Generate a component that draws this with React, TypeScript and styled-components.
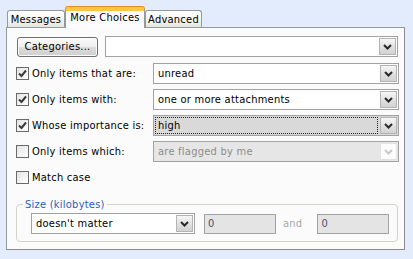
import React from "react";
import styled, { createGlobalStyle, css } from "styled-components";

const Global = createGlobalStyle`
  html, body { margin: 0; padding: 0; }
  body {
    background: #e2ecfc;
    font-family: "DejaVu Sans Condensed", "DejaVu Sans", "Liberation Sans", sans-serif;
    font-size: 11px;
    letter-spacing: 0.25px;
    color: #000;
    width: 413px;
    height: 259px;
    overflow: hidden;
  }
`;

const Page = styled.div`
  padding: 7px 0 0 6px;
`;

const TabRow = styled.div`
  display: flex;
  align-items: flex-end;
  height: 20px;
  margin-left: 1px;
`;

const Tab = styled.div<{ $active?: boolean; $w: number }>`
  box-sizing: border-box;
  width: ${(p) => p.$w}px;
  height: 17px;
  display: flex;
  align-items: center;
  justify-content: center;
  border: 1px solid #919b9c;
  border-bottom: none;
  border-radius: 3px 3px 0 0;
  background: linear-gradient(#ffffff, #f3f3ef 60%, #e7e7e1);
  color: #000;
  padding-top: 1px;
  ${(p) =>
    p.$active &&
    css`
      height: 21px;
      margin-bottom: -1px;
      position: relative;
      z-index: 1;
      background: #fcfcfe;
      border-top: 3px solid #ffc83c;
      box-shadow: inset 0 1px 0 #ffc83c, 0 -1px 0 #e68b2c;
      align-items: flex-start;
      padding-top: 1px;
    `}
`;

const Panel = styled.div`
  box-sizing: border-box;
  width: 399px;
  height: 223px;
  border: 1px solid #919b9c;
  border-right-color: #8c8c8c;
  border-bottom-color: #8c8c8c;
  background: #fbfbfb;
  padding: 8px 5px 0 9px;
  display: flex;
  flex-direction: column;
`;

const TopRow = styled.div`
  display: flex;
  align-items: center;
  height: 21px;
`;

const Button = styled.div`
  box-sizing: border-box;
  width: 81px;
  height: 20px;
  margin-left: 1px;
  border: 1px solid #707070;
  border-radius: 3px;
  background: linear-gradient(#fbfbfb, #eeeeee 50%, #dcdcdc 51%, #cfcfcf);
  box-shadow: inset 0 0 0 1px #fbfbfb;
  display: flex;
  align-items: center;
  justify-content: center;
  padding-bottom: 1px;
`;

const Combo = styled.div<{ $state?: "normal" | "focus" | "disabled"; $w?: number }>`
  box-sizing: border-box;
  height: 21px;
  ${(p) => (p.$w ? `width: ${p.$w}px;` : "flex: 1;")}
  border: 1px solid #a2a2a2;
  padding: 1px;
  display: flex;
  align-items: stretch;
  background: ${(p) =>
    p.$state === "focus" ? "#d9d9d9" : p.$state === "disabled" ? "#e6e6e6" : "#ffffff"};
  color: ${(p) => (p.$state === "disabled" ? "#8d8d8d" : "#000")};
`;

const ComboText = styled.div<{ $focus?: boolean }>`
  flex: 1;
  display: flex;
  align-items: center;
  padding-left: 2px;
  white-space: nowrap;
  overflow: hidden;
  border: 1px dotted ${(p) => (p.$focus ? "#222" : "transparent")};
  margin: 0 2px 0 0;
`;

const ArrowBtn = styled.div<{ $disabled?: boolean }>`
  box-sizing: border-box;
  width: 17px;
  height: 17px;
  display: flex;
  align-items: center;
  justify-content: center;
  border: 1px solid ${(p) => (p.$disabled ? "#e2e2e2" : "#b4b4b4")};
  background: ${(p) =>
    p.$disabled ? "#fcfcfc" : "linear-gradient(#f6f6f6, #e2e2e2 50%, #d2d2d2)"};
  color: ${(p) => (p.$disabled ? "#c8c8c8" : "#2a2a2a")};
`;

const TextField = styled.div`
  box-sizing: border-box;
  flex: 1;
  height: 21px;
  margin-left: 7px;
  margin-right: 1px;
  border: 1px solid #a2a2a2;
  padding: 1px;
  background: #fff;
  display: flex;
  justify-content: flex-end;
`;

const Grid = styled.div`
  display: grid;
  grid-template-columns: 137px 1fr;
  grid-auto-rows: 21px;
  row-gap: 5px;
  margin-top: 6px;
`;

const CheckRow = styled.label<{ $disabled?: boolean }>`
  display: flex;
  align-items: center;
  color: ${(p) => (p.$disabled ? "#7a7a7a" : "#000")};
`;

const Box = styled.span`
  box-sizing: border-box;
  width: 13px;
  height: 13px;
  margin-right: 3px;
  border: 1px solid #6a6a6a;
  background: linear-gradient(135deg, #e4e4e4, #ffffff);
  display: inline-flex;
  align-items: center;
  justify-content: center;
`;

const Fieldset = styled.fieldset`
  box-sizing: border-box;
  margin: 10px 1px 0 0;
  padding: 0;
  border: 1px solid #d3d3cb;
  border-radius: 4px;
  min-width: 0;
`;

const Legend = styled.legend`
  margin-left: 6px;
  padding: 0 2px;
  color: #2a5fbe;
  line-height: 13px;
`;

const SizeRow = styled.div`
  display: flex;
  align-items: center;
  padding: 2px 0 7px 14px;
`;

const NumField = styled.div<{ $ml: number }>`
  box-sizing: border-box;
  width: 72px;
  height: 20px;
  margin-left: ${(p) => p.$ml}px;
  border: 1px solid #a2a2a2;
  background: #e4e4e4;
  color: #4f4f6f;
  display: flex;
  align-items: center;
  padding-left: 3px;
`;

const AndLabel = styled.span`
  color: #a8a8a8;
  margin-left: 7px;
`;

const Chevron = () => (
  <svg width="9" height="6" viewBox="0 0 9 6">
    <path d="M1 1 L4.5 4.5 L8 1" fill="none" stroke="currentColor" strokeWidth="2" />
  </svg>
);

const Check = () => (
  <svg width="9" height="9" viewBox="0 0 9 9">
    <path d="M1 4.5 L3.5 7 L8 1.5" fill="none" stroke="#3a3a3a" strokeWidth="2" />
  </svg>
);

const CheckBox = ({ checked }: { checked?: boolean }) => <Box>{checked && <Check />}</Box>;

const Select = ({
  value,
  state,
  width,
}: {
  value: string;
  state?: "normal" | "focus" | "disabled";
  width?: number;
}) => (
  <Combo $state={state} $w={width}>
    <ComboText $focus={state === "focus"}>{value}</ComboText>
    <ArrowBtn $disabled={state === "disabled"}>
      <Chevron />
    </ArrowBtn>
  </Combo>
);

const rows: { label: string; value: string; checked: boolean; state?: "normal" | "focus" | "disabled" }[] = [
  { label: "Only items that are:", value: "unread", checked: true },
  { label: "Only items with:", value: "one or more attachments", checked: true },
  { label: "Whose importance is:", value: "high", checked: true, state: "focus" },
  { label: "Only items which:", value: "are flagged by me", checked: false, state: "disabled" },
];

export default function App() {
  return (
    <>
      <Global />
      <Page>
        <TabRow>
          <Tab $w={58}>Messages</Tab>
          <Tab $w={80} $active>
            More Choices
          </Tab>
          <Tab $w={57}>Advanced</Tab>
        </TabRow>
        <Panel>
          <TopRow>
            <Button>Categories...</Button>
            <TextField>
              <ArrowBtn>
                <Chevron />
              </ArrowBtn>
            </TextField>
          </TopRow>
          <Grid>
            {rows.map((r) => (
              <React.Fragment key={r.label}>
                <CheckRow>
                  <CheckBox checked={r.checked} />
                  {r.label}
                </CheckRow>
                <Select value={r.value} state={r.state} />
              </React.Fragment>
            ))}
            <CheckRow>
              <CheckBox />
              Match case
            </CheckRow>
          </Grid>
          <Fieldset>
            <Legend>Size (kilobytes)</Legend>
            <SizeRow>
              <Select value="doesn't matter" width={164} />
              <NumField $ml={9}>0</NumField>
              <AndLabel>and</AndLabel>
              <NumField $ml={15}>0</NumField>
            </SizeRow>
          </Fieldset>
        </Panel>
      </Page>
    </>
  );
}
